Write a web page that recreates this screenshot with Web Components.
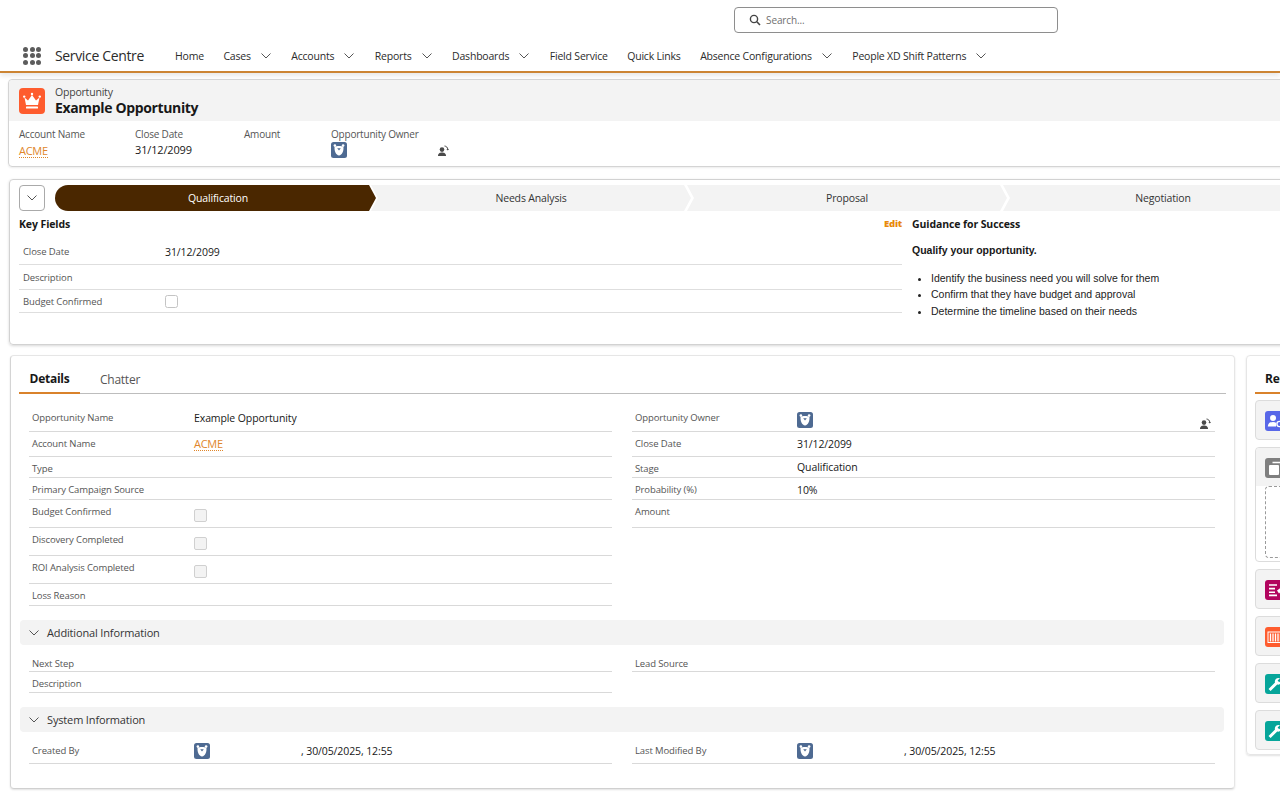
<!DOCTYPE html>
<html lang="en">
<head>
<meta charset="utf-8">
<title>Opportunity</title>
<style>
  html, body { margin: 0; padding: 0; background: #fff; overflow: hidden; height: 800px; }
  body { font-family: "Open Sans", "Liberation Sans", sans-serif; color: #181818; }
  .page { width: 1310px; }
</style>
</head>
<body>
<div class="page">
  <app-header></app-header>
  <highlights-panel></highlights-panel>
  <path-panel></path-panel>
  <div style="display:flex;gap:11px;margin-left:10px;margin-top:10px;align-items:flex-start">
    <details-card></details-card>
    <related-card></related-card>
  </div>
</div>

<script>
const ICONS = {
  chevron: '<path d="M1.5 3.5 L6 8 L10.5 3.5" fill="none" stroke="currentColor" stroke-width="1"/>',
  search: '<circle cx="5" cy="5" r="3.6" fill="none" stroke="currentColor" stroke-width="1.4"/><path d="M7.8 7.8 L11 11" stroke="currentColor" stroke-width="1.6"/>',
  swap: '<circle cx="5" cy="4.6" r="2.3" fill="currentColor"/><path d="M1 11 C1 8 3 7.4 5 7.4 C7 7.4 9 8 9 11 Z" fill="currentColor"/><path d="M7.5 1 C9.4 1.2 10.6 2.4 10.8 4.4" fill="none" stroke="currentColor" stroke-width="1"/><path d="M9.4 3.9 L10.8 5.4 L12 3.9 Z" fill="currentColor"/>',
  bear: '<rect width="16" height="16" rx="2.5" fill="#4e6a92"/><circle cx="3.9" cy="3.6" r="1.3" fill="#fff"/><circle cx="12.1" cy="3.6" r="1.3" fill="#fff"/><path d="M3.6 5 C5.4 3.7 10.6 3.7 12.4 5 C13 8.4 11 13.4 8 13.4 C5 13.4 3 8.4 3.6 5 Z" fill="#fff"/><path d="M6.2 6.2 H9.8 L8 8.6 Z" fill="#4e6a92"/>',
  crown: '<rect width="26" height="26" rx="4" fill="#fe5c2e"/><path d="M5.5 9.5 L9 12.5 L13 7 L17 12.5 L20.5 9.5 L19 17 H7 Z" fill="#fff"/><circle cx="5.2" cy="8.6" r="1.2" fill="#fff"/><circle cx="20.8" cy="8.6" r="1.2" fill="#fff"/><circle cx="13" cy="6" r="1.2" fill="#fff"/><rect x="7" y="18.4" width="12" height="2.2" rx=".6" fill="#fff"/>',
  contact: '<rect width="20" height="20" rx="3" fill="#5867e8"/><circle cx="8" cy="7" r="3" fill="#fff"/><path d="M2.8 15.5 C3 11.8 5.5 11 8 11 C9.4 11 10.4 11.3 11 11.8 L11 15.5 Z" fill="#fff"/><circle cx="14.5" cy="13" r="2.6" fill="none" stroke="#fff" stroke-width="1.4"/>',
  copy: '<rect width="20" height="20" rx="3" fill="#7f7f7f"/><rect x="4" y="7" width="10" height="10" rx="1" fill="#fff"/><path d="M7.5 4.5 H17 V13" fill="none" stroke="#fff" stroke-width="1.5"/>',
  ledger: '<rect width="20" height="20" rx="3" fill="#b2045e"/><path d="M4 5 H12 M4 8.6 H10 M4 12.2 H10 M4 15.4 H12" stroke="#fff" stroke-width="1.6"/><path d="M12 10.5 L16 7.5 L18 9.5 L14 13.5 Z" fill="#fff"/>',
  barcode: '<rect width="20" height="20" rx="3" fill="#fe5c2e"/><rect x="3" y="5" width="16" height="10.5" fill="none" stroke="#fff" stroke-width="1"/><path d="M5.5 6.5 V14.5 M8 6.5 V14.5 M10.5 6.5 V14.5 M13 6.5 V14.5 M15.5 6.5 V14.5" stroke="#fff" stroke-width="1.3"/>',
  wrench: '<rect width="20" height="20" rx="3" fill="#06a59a"/><path d="M3.5 15 L10 8.6 C9.3 6.4 10.8 4 13.6 4 L15 4.2 L12.6 6.6 L14.2 8.2 L16.6 5.8 C17.2 8.8 15 11.2 12.2 10.6 L5.6 17 Z" fill="#fff"/>'
};

class SfIcon extends HTMLElement {
  connectedCallback() {
    const size = this.getAttribute('size') || 16;
    const box = this.getAttribute('box') || size;
    const root = this.shadowRoot || this.attachShadow({mode: 'open'});
    root.innerHTML = `<style>:host{display:inline-flex;flex:none;line-height:0}</style>
      <svg width="${size}" height="${size}" viewBox="0 0 ${box} ${box}">${ICONS[this.getAttribute('name')]}</svg>`;
  }
}
customElements.define('sf-icon', SfIcon);

class NavItem extends HTMLElement {
  constructor() {
    super();
    const menu = this.hasAttribute('menu');
    this.attachShadow({mode: 'open'}).innerHTML = `<style>
        :host { display: inline-flex; align-items: center; gap: 9px; font-size: 10.5px; letter-spacing: -.2px; color: #2b2b2b; white-space: nowrap; }
        sf-icon { color: #555; }
      </style><slot></slot>${menu ? '<sf-icon name="chevron" size="12" box="12"></sf-icon>' : ''}`;
  }
}
customElements.define('nav-item', NavItem);

class AppHeader extends HTMLElement {
  constructor() {
    super();
    this.attachShadow({mode: 'open'}).innerHTML = `<style>
        :host { display: block; height: 71px; width: 1280px; border-bottom: 2px solid #cc8433; box-shadow: 0 3px 5px rgba(0,0,0,.09); box-sizing: content-box; }
        .top { height: 40px; display: flex; padding: 7px 0 0 734px; box-sizing: border-box; }
        .search { width: 324px; height: 26px; box-sizing: border-box; border: 1px solid #8e8e8e; border-radius: 4px; display: flex; align-items: center; padding-left: 14px; gap: 5px; font-size: 10px; color: #6f6f6f; letter-spacing: -.1px; }
        .search sf-icon { color: #444; }
        .bar { display: flex; align-items: center; height: 31px; }
        .dots { display: grid; grid-template-columns: repeat(3, 5px); gap: 1.5px; margin: 0 14px 0 23px; }
        .dots i { width: 5px; height: 5px; border-radius: 50%; background: #5c5c5c; }
        .app { font-size: 14px; letter-spacing: -.35px; color: #2b2b2b; width: 120px; white-space: nowrap; }
        nav { display: flex; align-items: center; gap: 19.5px; }
      </style>
      <div class="top"><div class="search"><sf-icon name="search" size="12" box="12"></sf-icon><span>Search...</span></div></div>
      <div class="bar">
        <div class="dots"><i></i><i></i><i></i><i></i><i></i><i></i><i></i><i></i><i></i></div>
        <div class="app">Service Centre</div>
        <nav>
          <nav-item>Home</nav-item>
          <nav-item menu>Cases</nav-item>
          <nav-item menu>Accounts</nav-item>
          <nav-item menu>Reports</nav-item>
          <nav-item menu>Dashboards</nav-item>
          <nav-item>Field Service</nav-item>
          <nav-item>Quick Links</nav-item>
          <nav-item menu>Absence Configurations</nav-item>
          <nav-item menu>People XD Shift Patterns</nav-item>
        </nav>
      </div>`;
  }
}
customElements.define('app-header', AppHeader);

class HighlightField extends HTMLElement {
  constructor() {
    super();
    this.attachShadow({mode: 'open'}).innerHTML = `<style>
        :host { display: block; }
        .l { font-size: 10px; letter-spacing: -.2px; color: #555; line-height: 14px; height: 15px; white-space: nowrap; }
        .v { font-size: 11px; letter-spacing: -.15px; line-height: 16px; min-height: 16px; display: flex; align-items: center; }
      </style><div class="l">${this.getAttribute('label')}</div><div class="v"><slot></slot></div>`;
  }
}
customElements.define('highlight-field', HighlightField);

class RecordLink extends HTMLElement {
  constructor() {
    super();
    this.attachShadow({mode: 'open'}).innerHTML = `<style>
        :host { display: inline-block; color: #e0862a; border-bottom: 1px dotted #e0862a; line-height: 12px; font-size: 11px; letter-spacing: -.3px; }
      </style><slot></slot>`;
  }
}
customElements.define('record-link', RecordLink);

class HighlightsPanel extends HTMLElement {
  constructor() {
    super();
    this.attachShadow({mode: 'open'}).innerHTML = `<style>
        :host { display: block; margin: 6px 0 0 8px; width: 1300px; height: 88px; box-sizing: border-box; border: 1px solid #d4d4d4; border-radius: 4px; box-shadow: 0 1px 2px rgba(0,0,0,.08); }
        .head { height: 41px; background: #f3f3f3; display: flex; align-items: center; padding-left: 10px; gap: 10px; box-sizing: border-box; border-radius: 4px 4px 0 0; }
        .kind { font-size: 10.5px; letter-spacing: -.2px; color: #444; line-height: 13px; }
        .name { font-size: 14px; font-weight: 700; letter-spacing: -.35px; line-height: 17px; }
        .row { display: flex; padding: 6px 0 0 10px; }
        .row > :nth-child(1) { width: 116px; }
        .row > :nth-child(2) { width: 109px; }
        .row > :nth-child(3) { width: 87px; }
        .owner { width: 118px; display: flex; justify-content: space-between; align-items: flex-end; }
        .owner sf-icon[name=swap] { color: #4a4a4a; margin-bottom: 1px; }
        .row record-link { margin-top: 2px; }
      </style>
      <div class="head"><sf-icon name="crown" size="26" box="26"></sf-icon><div><div class="kind">Opportunity</div><div class="name">Example Opportunity</div></div></div>
      <div class="row">
        <highlight-field label="Account Name"><record-link>ACME</record-link></highlight-field>
        <highlight-field label="Close Date">31/12/2099</highlight-field>
        <highlight-field label="Amount"></highlight-field>
        <highlight-field label="Opportunity Owner"><span class="owner"><sf-icon name="bear" size="16" box="16"></sf-icon><sf-icon name="swap" size="12" box="12"></sf-icon></span></highlight-field>
      </div>`;
  }
}
customElements.define('highlights-panel', HighlightsPanel);

class PathStep extends HTMLElement {
  static get observedAttributes() { return ['current']; }
  constructor() {
    super();
    this.attachShadow({mode: 'open'}).innerHTML = `<style>
        :host { display: flex; flex: none; width: 320px; height: 26px; margin-right: -4px; align-items: center; justify-content: center; font-size: 10.5px; letter-spacing: -.15px; background: #f3f3f3; color: #333;
          clip-path: polygon(0 0, calc(100% - 7px) 0, 100% 50%, calc(100% - 7px) 100%, 0 100%, 7px 50%); }
        :host([current]) { width: 321px; background: #4a2700; color: #fff; border-radius: 13px 0 0 13px; padding-left: 5px; box-sizing: border-box; margin-right: -5px;
          clip-path: polygon(0 0, calc(100% - 7px) 0, 100% 50%, calc(100% - 7px) 100%, 0 100%); }
      </style><slot></slot>`;
  }
}
customElements.define('path-step', PathStep);

class KeyRow extends HTMLElement {
  constructor() {
    super();
    this.attachShadow({mode: 'open'}).innerHTML = `<style>
        :host { display: grid; grid-template-columns: 142px 1fr; align-items: center; box-sizing: border-box; padding-left: 4px; border-bottom: 1px solid #dedede; }
        .l { font-size: 9.5px; letter-spacing: -.12px; color: #555; }
        .v { font-size: 10.5px; letter-spacing: -.1px; }
      </style><div class="l">${this.getAttribute('label')}</div><div class="v"><slot></slot></div>`;
  }
}
customElements.define('key-row', KeyRow);

class PathPanel extends HTMLElement {
  constructor() {
    super();
    this.attachShadow({mode: 'open'}).innerHTML = `<style>
        :host { display: block; margin: 12px 0 0 9px; width: 1300px; height: 166px; box-sizing: border-box; border: 1px solid #d2d2d2; border-radius: 4px; box-shadow: 0 1px 3px rgba(0,0,0,.16); padding: 5px 0 0 9px; }
        .steps { display: flex; align-items: center; }
        .toggle { width: 26px; height: 26px; box-sizing: border-box; border: 1px solid #aaa; border-radius: 4px; display: flex; align-items: center; justify-content: center; margin-right: 10px; color: #555; flex: none; }
        .body { display: flex; }
        .keys { width: 883px; padding-top: 5px; }
        .title { display: flex; justify-content: space-between; align-items: center; font-size: 10.5px; font-weight: 700; letter-spacing: -.1px; line-height: 16px; }
        .title b { color: #e8890c; font-size: 9.5px; letter-spacing: -.2px; }
        key-row:nth-of-type(1) { height: 26px; margin-top: 7px; }
        key-row:nth-of-type(2) { height: 25px; }
        key-row:nth-of-type(3) { height: 23px; }
        .guide { margin-left: 10px; padding-top: 5px; font-family: "Liberation Sans", Arial, sans-serif; font-size: 10.5px; }
        .guide .gt { font-family: "Open Sans", sans-serif; font-weight: 700; letter-spacing: -.1px; line-height: 16px; }
        .guide p { font-weight: 700; margin: 12px 0 14px; line-height: 12px; }
        .guide ul { margin: 0; padding: 0 0 0 19px; line-height: 16.3px; color: #222; }
        .box { width: 13px; height: 13px; box-sizing: border-box; border: 1px solid #c4c4c4; border-radius: 2.5px; background: #fff; display: block; margin-top: 0; }
      </style>
      <div class="steps">
        <div class="toggle"><sf-icon name="chevron" size="12" box="12"></sf-icon></div>
        <path-step current>Qualification</path-step>
        <path-step>Needs Analysis</path-step>
        <path-step>Proposal</path-step>
        <path-step>Negotiation</path-step>
      </div>
      <div class="body">
        <div class="keys">
          <div class="title">Key Fields<b>Edit</b></div>
          <key-row label="Close Date">31/12/2099</key-row>
          <key-row label="Description"></key-row>
          <key-row label="Budget Confirmed"><span class="box"></span></key-row>
        </div>
        <div class="guide">
          <div class="gt">Guidance for Success</div>
          <p>Qualify your opportunity.</p>
          <ul>
            <li>Identify the business need you will solve for them</li>
            <li>Confirm that they have budget and approval</li>
            <li>Determine the timeline based on their needs</li>
          </ul>
        </div>
      </div>`;
  }
}
customElements.define('path-panel', PathPanel);

class RecordField extends HTMLElement {
  constructor() {
    super();
    const h = this.getAttribute('h') || 22;
    const line = this.hasAttribute('noline') ? 'none' : '1px solid #d9d9d9';
    this.attachShadow({mode: 'open'}).innerHTML = `<style>
        :host { display: grid; grid-template-columns: 162px 1fr; height: ${h}px; box-sizing: border-box; border-bottom: ${line}; padding-left: 3px; }
        .l { font-size: 9.5px; letter-spacing: -.12px; color: #555; line-height: 16px; padding-top: 4px; white-space: nowrap; }
        .v { font-size: 10.5px; letter-spacing: -.1px; line-height: 16px; padding-top: var(--vtop, 4px); display: flex; align-items: flex-start; }
      </style><div class="l">${this.getAttribute('label') || ''}</div><div class="v"><slot></slot></div>`;
  }
}
customElements.define('record-field', RecordField);

class SectionBar extends HTMLElement {
  constructor() {
    super();
    this.attachShadow({mode: 'open'}).innerHTML = `<style>
        :host { display: flex; align-items: center; gap: 7px; height: 25px; width: 1204px; margin-left: 1px; padding-left: 8px; box-sizing: border-box; background: #f3f3f3; border-radius: 4px; font-size: 11px; letter-spacing: -.15px; color: #333; }
        sf-icon { color: #555; }
      </style><sf-icon name="chevron" size="12" box="12"></sf-icon><slot></slot>`;
  }
}
customElements.define('section-bar', SectionBar);

class DetailsCard extends HTMLElement {
  constructor() {
    super();
    this.attachShadow({mode: 'open'}).innerHTML = `<style>
        :host { display: block; flex: none; width: 1225px; height: 434px; box-sizing: border-box; border: 1px solid #e6e6e6; border-left-color: #d4d4d4; border-bottom-color: #d0d0d0; border-radius: 4px; box-shadow: 0 1px 2px rgba(0,0,0,.12); padding: 0 8px; }
        .tabs { display: flex; height: 38px; width: 1207px; box-sizing: border-box; border-bottom: 1px solid #bdbdbd; }
        .tab { height: 38px; box-sizing: border-box; display: flex; align-items: center; padding-top: 9px; font-size: 12px; letter-spacing: -.25px; color: #555; }
        .tab.on { width: 61px; justify-content: center; font-weight: 700; color: #181818; border-bottom: 2px solid #d9822b; margin-right: 20px; }
        .cols { display: grid; grid-template-columns: 583px 583px; column-gap: 20px; padding-left: 10px; }
        .first { margin-top: 12px; }
        .owner { width: 100%; display: flex; justify-content: space-between; padding-right: 4px; box-sizing: border-box; }
        .owner sf-icon[name=swap] { color: #4a4a4a; margin-top: 6px; }
        .stamp { display: flex; gap: 91px; align-items: center; }
        .box { width: 13px; height: 13px; box-sizing: border-box; border: 1px solid #d0d0d0; border-radius: 2px; background: #f3f3f3; margin-top: 5px; }
        section-bar { margin-top: 14px; }
        .sub { margin-top: 7px; }
      </style>
      <div class="tabs"><div class="tab on">Details</div><div class="tab">Chatter</div></div>
      <div class="cols first">
        <div>
          <record-field h="26" label="Opportunity Name">Example Opportunity</record-field>
          <record-field h="25" label="Account Name" style="--vtop:6px"><record-link>ACME</record-link></record-field>
          <record-field h="21" label="Type" style="--vtop:2px"></record-field>
          <record-field h="22" label="Primary Campaign Source"></record-field>
          <record-field h="28" label="Budget Confirmed"><span class="box"></span></record-field>
          <record-field h="28" label="Discovery Completed"><span class="box"></span></record-field>
          <record-field h="28" label="ROI Analysis Completed"><span class="box"></span></record-field>
          <record-field h="22" label="Loss Reason"></record-field>
        </div>
        <div>
          <record-field h="26" label="Opportunity Owner" style="--vtop:6px"><span class="owner"><sf-icon name="bear" size="16" box="16"></sf-icon><sf-icon name="swap" size="12" box="12"></sf-icon></span></record-field>
          <record-field h="25" label="Close Date">31/12/2099</record-field>
          <record-field h="21" label="Stage" style="--vtop:2px">Qualification</record-field>
          <record-field h="22" label="Probability (%)">10%</record-field>
          <record-field h="28" label="Amount"></record-field>
        </div>
      </div>
      <section-bar>Additional Information</section-bar>
      <div class="cols sub">
        <div>
          <record-field h="20" label="Next Step" style="padding-top:0"></record-field>
          <record-field h="21" label="Description"></record-field>
        </div>
        <div>
          <record-field h="20" label="Lead Source"></record-field>
        </div>
      </div>
      <section-bar>System Information</section-bar>
      <div class="cols sub">
        <div><record-field h="25" label="Created By"><span class="stamp"><sf-icon name="bear" size="16" box="16"></sf-icon><span>, 30/05/2025, 12:55</span></span></record-field></div>
        <div><record-field h="25" label="Last Modified By"><span class="stamp"><sf-icon name="bear" size="16" box="16"></sf-icon><span>, 30/05/2025, 12:55</span></span></record-field></div>
      </div>`;
  }
}
customElements.define('details-card', DetailsCard);

class RelatedTile extends HTMLElement {
  constructor() {
    super();
    this.attachShadow({mode: 'open'}).innerHTML = `<style>
        :host { display: block; box-sizing: border-box; border: 1px solid #dcdcdc; border-radius: 4px; background: #f3f3f3; height: 40px; padding: 10px 0 0 9px; }
      </style><sf-icon name="${this.getAttribute('icon')}" size="20" box="20"></sf-icon>`;
  }
}
customElements.define('related-tile', RelatedTile);

class RelatedCard extends HTMLElement {
  constructor() {
    super();
    this.attachShadow({mode: 'open'}).innerHTML = `<style>
        :host { display: block; flex: none; width: 70px; height: 400px; box-sizing: border-box; border: 1px solid #e6e6e6; border-radius: 4px; box-shadow: 0 1px 2px rgba(0,0,0,.12); padding: 0 0 0 8px; }
        .tab { height: 38px; box-sizing: border-box; width: 61px; border-bottom: 2px solid #d9822b; padding: 15px 0 0 10px; font-size: 12px; font-weight: 700; letter-spacing: -.25px; line-height: 16px; white-space: nowrap; overflow: hidden; }
        .stack { display: flex; flex-direction: column; gap: 7px; margin-top: 6px; }
        .doc { box-sizing: border-box; border: 1px solid #dcdcdc; border-radius: 4px; height: 115px; }
        .doc .h { height: 38px; background: #f3f3f3; padding: 10px 0 0 9px; box-sizing: border-box; border-radius: 4px 4px 0 0; }
        .doc .d { margin: 0 0 0 9px; height: 72px; box-sizing: border-box; border: 1px dashed #9a9a9a; border-radius: 4px; }
      </style>
      <div class="tab">Related</div>
      <div class="stack">
        <related-tile icon="contact"></related-tile>
        <div class="doc"><div class="h"><sf-icon name="copy" size="20" box="20"></sf-icon></div><div class="d"></div></div>
        <related-tile icon="ledger"></related-tile>
        <related-tile icon="barcode"></related-tile>
        <related-tile icon="wrench"></related-tile>
        <related-tile icon="wrench"></related-tile>
      </div>`;
  }
}
customElements.define('related-card', RelatedCard);
</script>
</body>
</html>
